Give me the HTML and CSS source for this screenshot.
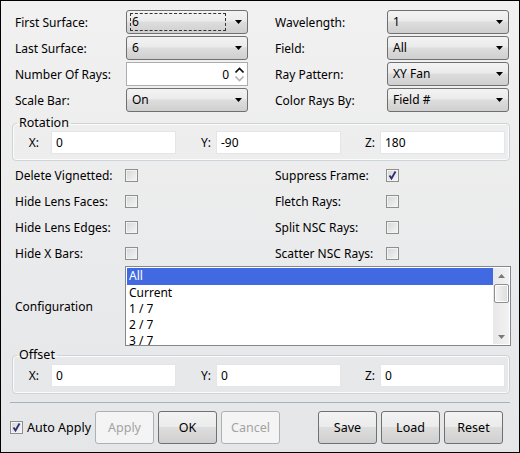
FILE: index.html
```html
<!DOCTYPE html>
<html>
<head>
<meta charset="utf-8">
<link rel="stylesheet" href="styles.css">
</head>
<body>
<div class="win">
  <div class="grid top">
    <span class="lbl">First Surface:</span>
    <div class="combo"><span class="val focus">6</span><svg class="arr" width="7" height="4" viewBox="0 0 7 4"><path d="M0 0H7L3.5 4Z"/></svg></div>
    <span></span>
    <span class="lbl">Wavelength:</span>
    <div class="combo"><span class="val">1</span><svg class="arr" width="7" height="4" viewBox="0 0 7 4"><path d="M0 0H7L3.5 4Z"/></svg></div>

    <span class="lbl">Last Surface:</span>
    <div class="combo"><span class="val">6</span><svg class="arr" width="7" height="4" viewBox="0 0 7 4"><path d="M0 0H7L3.5 4Z"/></svg></div>
    <span></span>
    <span class="lbl">Field:</span>
    <div class="combo"><span class="val">All</span><svg class="arr" width="7" height="4" viewBox="0 0 7 4"><path d="M0 0H7L3.5 4Z"/></svg></div>

    <span class="lbl">Number Of Rays:</span>
    <div class="spin"><span class="num">0</span>
      <div class="spinbtns">
        <svg width="9" height="6" viewBox="0 0 9 6"><path d="M0.5 5.5L4.5 1.5L8.5 5.5" fill="none" stroke="#111" stroke-width="1.6"/></svg>
        <svg width="9" height="6" viewBox="0 0 9 6"><path d="M0.5 0.5L4.5 4.5L8.5 0.5" fill="none" stroke="#b5b5b5" stroke-width="1.6"/></svg>
      </div>
    </div>
    <span></span>
    <span class="lbl">Ray Pattern:</span>
    <div class="combo"><span class="val">XY Fan</span><svg class="arr" width="7" height="4" viewBox="0 0 7 4"><path d="M0 0H7L3.5 4Z"/></svg></div>

    <span class="lbl">Scale Bar:</span>
    <div class="combo"><span class="val">On</span><svg class="arr" width="7" height="4" viewBox="0 0 7 4"><path d="M0 0H7L3.5 4Z"/></svg></div>
    <span></span>
    <span class="lbl">Color Rays By:</span>
    <div class="combo"><span class="val">Field #</span><svg class="arr" width="7" height="4" viewBox="0 0 7 4"><path d="M0 0H7L3.5 4Z"/></svg></div>
  </div>

  <fieldset class="group rot">
    <legend>Rotation</legend>
    <div class="xyz">
      <span class="axis ax-x">X:</span><div class="tb">0</div>
      <span class="axis">Y:</span><div class="tb">-90</div>
      <span class="axis">Z:</span><div class="tb">180</div>
    </div>
  </fieldset>

  <div class="grid checks">
    <span class="lbl">Delete Vignetted:</span><span class="cb"></span><span></span>
    <span class="lbl">Suppress Frame:</span><span class="cb checked"><svg width="11" height="11" viewBox="0 0 11 11"><path d="M2.5 5.5L4.5 8.5L8.5 1.5" fill="none" stroke="#2b2f6e" stroke-width="1.8"/></svg></span>

    <span class="lbl">Hide Lens Faces:</span><span class="cb"></span><span></span>
    <span class="lbl">Fletch Rays:</span><span class="cb"></span>

    <span class="lbl">Hide Lens Edges:</span><span class="cb"></span><span></span>
    <span class="lbl">Split NSC Rays:</span><span class="cb"></span>

    <span class="lbl">Hide X Bars:</span><span class="cb"></span><span></span>
    <span class="lbl">Scatter NSC Rays:</span><span class="cb"></span>
  </div>

  <div class="config">
    <span class="lbl">Configuration</span>
    <div class="listbox">
      <div class="items">
        <div class="item sel">All</div>
        <div class="item">Current</div>
        <div class="item">1 / 7</div>
        <div class="item">2 / 7</div>
        <div class="item">3 / 7</div>
      </div>
      <div class="vscroll">
        <svg width="7" height="4" viewBox="0 0 7 4"><path d="M0 4H7L3.5 0Z" fill="#7a7a7a"/></svg>
        <div class="thumb"></div>
        <div class="track"></div>
        <svg width="7" height="4" viewBox="0 0 7 4"><path d="M0 0H7L3.5 4Z" fill="#7a7a7a"/></svg>
      </div>
    </div>
  </div>

  <fieldset class="group off">
    <legend>Offset</legend>
    <div class="xyz">
      <span class="axis ax-x">X:</span><div class="tb">0</div>
      <span class="axis">Y:</span><div class="tb">0</div>
      <span class="axis">Z:</span><div class="tb">0</div>
    </div>
  </fieldset>

  <div class="sep"></div>

  <div class="buttons">
    <span class="cb checked auto"><svg width="11" height="11" viewBox="0 0 11 11"><path d="M2.5 5.5L4.5 8.5L8.5 1.5" fill="none" stroke="#2b2f6e" stroke-width="1.8"/></svg></span>
    <span class="autolbl">Auto Apply</span>
    <button class="btn dis b-apply">Apply</button>
    <button class="btn">OK</button>
    <button class="btn dis">Cancel</button>
    <span class="spacer"></span>
    <button class="btn">Save</button>
    <button class="btn">Load</button>
    <button class="btn b-reset">Reset</button>
  </div>
</div>
</body>
</html>
```

FILE: styles.css
```css
* { box-sizing: border-box; }
html, body { margin: 0; padding: 0; }
body {
  width: 520px;
  height: 453px;
  font-family: "Noto Sans", "Open Sans", sans-serif;
  font-size: 12px;
  color: #000;
}
.win {
  width: 520px;
  height: 453px;
  border: 1px solid #000;
  background: linear-gradient(#f1f1f1, #e5e6e8);
  padding-top: 9px;
  display: flex;
  flex-direction: column;
}
.grid {
  display: grid;
  grid-template-columns: 111px 122px 27px 112px 122px;
  margin-left: 14px;
}
.top {
  grid-auto-rows: 24px;
  row-gap: 2px;
}
.lbl {
  display: flex;
  align-items: center;
  white-space: nowrap;
}
.combo {
  display: flex;
  align-items: center;
  height: 24px;
  border: 1px solid #707070;
  border-radius: 3px;
  background: linear-gradient(#f3f3f3 0%, #ebebeb 45%, #dddddd 50%, #cfcfcf 100%);
  padding: 0 5px 0 3px;
}
.combo .val {
  flex: 1;
  align-self: stretch;
  display: flex;
  align-items: center;
  padding: 0 0 2px 1px;
  margin: 2px 9px 2px 0;
  border: 1px solid transparent;
}
.combo .val.focus {
  border: 1px dashed #333;
}
.arr { fill: #000; }
.spin {
  display: flex;
  align-items: center;
  height: 24px;
  border: 1px solid #abadb3;
  background: #fff;
  padding-right: 2px;
}
.num {
  flex: 1;
  text-align: right;
  padding-right: 6px;
}
.spinbtns {
  display: flex;
  flex-direction: column;
  gap: 3px;
  width: 10px;
}
.spinbtns svg { display: block; }

fieldset.group {
  margin: 3px 9px 0 11px;
  padding: 0 0 6px 0;
  border: 1px solid #cdd4d9;
  border-radius: 4px;
  box-shadow: inset 0 0 0 1px #fbfbfb;
  min-width: 0;
}
fieldset.group legend {
  padding: 0 2px;
  margin-left: 4px;
  line-height: 16px;
  font-size: 12.5px;
}
.xyz {
  display: grid;
  grid-template-columns: 38px 125px 40px 125px 39px 125px;
  height: 23px;
}
.axis {
  display: flex;
  align-items: center;
  justify-content: flex-end;
  padding-right: 5px;
}
.axis.ax-x { padding-right: 12px; }
.tb {
  background: #fff;
  border: 1px solid #e3e5e8;
  display: flex;
  align-items: center;
  padding-left: 4px;
}
.checks {
  margin-top: 1px;
  grid-auto-rows: 26px;
}
.cb {
  width: 13px;
  height: 13px;
  align-self: center;
  margin-left: -1px;
  border: 1px solid #8e8f8f;
  background: linear-gradient(135deg, #d6d6d6, #f6f6f6);
  box-shadow: inset 0 0 0 1px #f3f3f3;
  display: flex;
  align-items: center;
  justify-content: center;
}
.cb svg { display: block; }
.config {
  display: flex;
  margin-left: 14px;
  height: 80px;
}
.config .lbl { width: 110px; }
.listbox {
  width: 386px;
  border: 1px solid #828790;
  background: #fff;
  display: flex;
  padding: 1px;
  overflow: hidden;
}
.items {
  flex: 1;
}
.item {
  height: 16px;
  line-height: 16px;
  padding-left: 2px;
  white-space: nowrap;
}
.item.sel {
  height: 17px;
  background: #4169e1;
  color: #fff;
}
.vscroll {
  width: 16px;
  background: linear-gradient(90deg, #e8e8e8, #f2f2f2);
  display: flex;
  flex-direction: column;
  align-items: center;
  padding: 6px 0 5px;
}
.thumb {
  width: 15px;
  height: 19px;
  margin-top: 6px;
  border: 1px solid #8e8f8f;
  border-radius: 2px;
  background: linear-gradient(90deg, #f4f4f4, #dcdcdc);
  box-shadow: inset 0 0 0 1px #fff;
}
.track { flex: 1; }
fieldset.off { margin-top: 1px; }
.off .xyz { margin-top: 1px; }
.sep {
  height: 1px;
  background: #a5b3bf;
  margin: 8px 9px 0 9px;
}
.buttons {
  display: flex;
  align-items: center;
  margin-top: 8px;
  padding-left: 9px;
  height: 33px;
}
.auto { margin-left: 0; }
.autolbl {
  margin-left: 4px;
  font-size: 12.5px;
  width: 68px;
}
.btn {
  font-family: inherit;
  font-size: 12.5px;
  width: 59px;
  height: 33px;
  margin: 0 4px 0 0;
  border: 1px solid #707070;
  border-radius: 3px;
  background: linear-gradient(#f3f3f3 0%, #ebebeb 48%, #dddddd 50%, #cfcfcf 100%);
  color: #000;
  padding: 0;
}
.btn.dis {
  border-color: #adb2b5;
  background: #f4f4f4;
  color: #a3a3a3;
}
.spacer { width: 34px; }
```
